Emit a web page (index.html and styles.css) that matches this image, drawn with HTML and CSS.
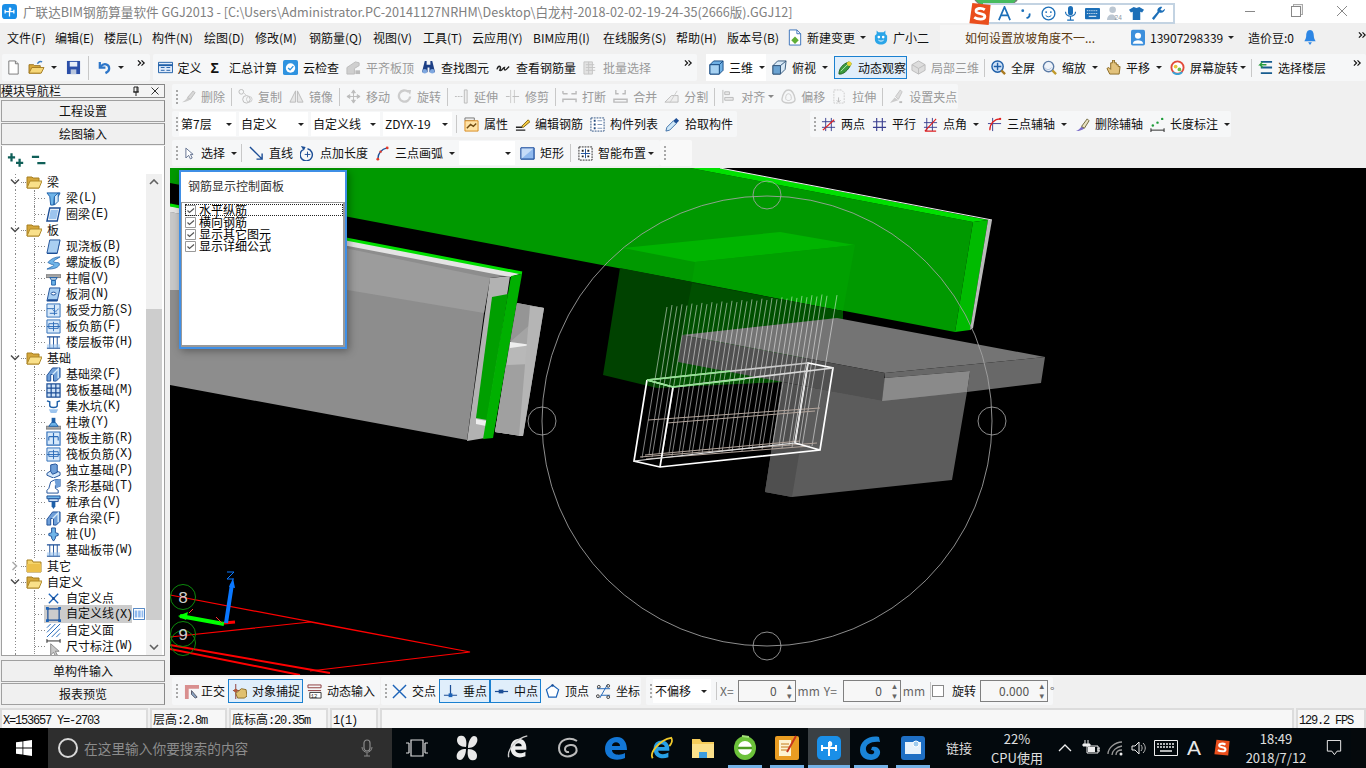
FILE: index.html
```html
<!DOCTYPE html>
<html lang="zh">
<head>
<meta charset="utf-8">
<title>广联达BIM钢筋算量软件</title>
<link rel="stylesheet" href="styles.css">
</head>
<body>
<svg class="defs" aria-hidden="true">
<defs>
<symbol id="ck" viewBox="0 0 11 11"><path d="M.5.5h10v10H.5z" fill="#fff" stroke="#999"/><path d="M2.500 5.500l2 2 4.500-4" fill="none" stroke="#555" stroke-width="1.200"/></symbol>
<symbol id="new" viewBox="0 0 16 16"><path d="M3 1h7l3 3v11H3z" fill="#fff" stroke="#777"/><path d="M10 1v3h3" fill="#ddd" stroke="#777"/></symbol>
<symbol id="open" viewBox="0 0 18 16"><path d="M1 14V5h5l1 1h6v8z" fill="#d9a93c" stroke="#9a7420"/><path d="M1 14l3-6h13l-3 6z" fill="#f6d778" stroke="#a37c24"/><path d="M10 4c1-2 3-3 5-2" fill="none" stroke="#3d7ec2" stroke-width="1.5"/></symbol>
<symbol id="save" viewBox="0 0 16 16"><path d="M1 1h14v14H1z" fill="#2b4fa8"/><path d="M4 2h8v5H4z" fill="#e8eef8"/><path d="M5 10h6v5H5z" fill="#b9c6de"/></symbol>
<symbol id="undo" viewBox="0 0 16 16"><path d="M3 2v6h6" fill="none" stroke="#2d76c9" stroke-width="2.4"/><path d="M4 7c3-4 9-3 9 2 0 2-2 4-4 5" fill="none" stroke="#2d76c9" stroke-width="2.4"/></symbol>
<symbol id="def" viewBox="0 0 16 16"><path d="M.5 2.500h15v11H.5z" fill="#dfeafa" stroke="#1f5fa8"/><path d="M.5 5.500h15" stroke="#1f5fa8" stroke-width="2"/><path d="M3 8h4M3 11h4M9 8h4M9 11h4" stroke="#1f5fa8"/></symbol>
<symbol id="cloud" viewBox="0 0 16 16"><rect width="16" height="16" rx="2" fill="#2f93e0"/><circle cx="8" cy="8.500" r="5" fill="#fff"/><path d="M5.500 8.500l2 2 3.500-4" fill="none" stroke="#2f93e0" stroke-width="1.500"/></symbol>
<symbol id="alig" viewBox="0 0 16 16"><path d="M1 15V8l9-6 4 1v3l-5 3v6z" fill="#cfcfcf" stroke="#bbb"/><path d="M10 15v-4h5v4z" fill="#bbb"/></symbol>
<symbol id="bino" viewBox="0 0 16 16"><path d="M4 1h2v4h4V1h2l3 12h-6V8H7v5H1z" fill="#1d3f85"/><circle cx="4" cy="12" r="2.500" fill="#7fa8e0"/><circle cx="12" cy="12" r="2.500" fill="#7fa8e0"/></symbol>
<symbol id="look" viewBox="0 0 16 16"><path d="M1 10c2-6 5-3 3 1 3 1 3-3 5-3-1 3 1 3 2 2l3-3" fill="none" stroke="#222" stroke-width="1.500"/></symbol>
<symbol id="batc" viewBox="0 0 16 16"><path d="M1 2h9v13H1z" fill="#e2e2e2" stroke="#c4c4c4"/><path d="M3 5h9M3 8h10M3 11h10M6 2v13" stroke="#c4c4c4"/></symbol>
<symbol id="cube" viewBox="0 0 16 16"><path d="M1 5l4-4h10v10l-4 4H1z" fill="#6fb0e4" stroke="#184b82"/><path d="M1 5h10v10M11 5l4-4" fill="none" stroke="#184b82"/><path d="M1 5h10v10H1z" fill="#a6d1f2" stroke="#184b82"/></symbol>
<symbol id="cube2" viewBox="0 0 16 16"><path d="M1 6l5-5h9l-1 9-5 5H1z" fill="#d9e9f6" stroke="#33577c"/><path d="M1 6h8v9M9 6l6-5" fill="none" stroke="#33577c"/><path d="M1 6h8v9H1z" fill="#6ba3d2" stroke="#33577c"/></symbol>
<symbol id="orbi" viewBox="0 0 16 16"><path d="M1 15c0-6 4-11 11-13l2 2C12 9 8 14 3 15z" fill="#3c9b3c" stroke="#1e5e1e"/><circle cx="12" cy="4" r="2.500" fill="#e8d434"/><path d="M3 12l7-7" stroke="#b7e7b7"/></symbol>
<symbol id="l3d" viewBox="0 0 16 16"><path d="M8 1l7 4v6l-7 4-7-4V5z" fill="#ddd" stroke="#bbb"/><path d="M1 5l7 4 7-4M8 9v6" fill="none" stroke="#bbb"/></symbol>
<symbol id="fit" viewBox="0 0 16 16"><circle cx="7" cy="7" r="6" fill="#cfe2f7" stroke="#1f5fa8" stroke-width="1.500"/><path d="M7 3v8M3 7h8" stroke="#1f5fa8" stroke-width="1.500"/><path d="M11 11l4 4" stroke="#a9791f" stroke-width="2.500"/></symbol>
<symbol id="zoom" viewBox="0 0 16 16"><circle cx="7" cy="7" r="5.500" fill="#eef3fa" stroke="#5b7ba6" stroke-width="1.500"/><path d="M11 11l4 4" stroke="#c09a2b" stroke-width="2.500"/><path d="M3 8c2 3 5 3 7 0" fill="none" stroke="#a9bedc"/></symbol>
<symbol id="hand" viewBox="0 0 16 16"><path d="M4 15l-3-6 2-1 2 2 0-7 2 0 0-3 2 0 0 3 2 0 0 2 2 0 0 2 2 0-1 8z" fill="#e2c27c" stroke="#8a6a24"/></symbol>
<symbol id="rota" viewBox="0 0 16 16"><circle cx="8" cy="8" r="6.500" fill="#fff" stroke="#e24a3a" stroke-width="2"/><path d="M3 13a7 7 0 0 0 10 0" fill="none" stroke="#37a3d8" stroke-width="2"/><circle cx="6" cy="7" r="2" fill="#e8c63a"/><circle cx="10" cy="10" r="2" fill="#6cbf4a"/></symbol>
<symbol id="flr" viewBox="0 0 16 16"><path d="M3 2h12M3 8h12M3 14h12" stroke="#175c8f" stroke-width="2"/><path d="M9 5H2l3-3M2 5l3 3" fill="none" stroke="#2a9d3f" stroke-width="1.500"/></symbol>
<symbol id="file" viewBox="0 0 14 18"><path d="M1 1h8l4 4v12H1z" fill="#fff" stroke="#3a72ba"/><path d="M9 1v4h4" fill="none" stroke="#3a72ba"/><path d="M7 8l4 4-4 4-4-4z" fill="#5fae35"/></symbol>
<symbol id="robo" viewBox="0 0 16 18"><path d="M3 1l2 2h6l2-2v4l2 2v4c0 4-3 6-7 6s-7-2-7-6V7l2-2z" fill="#2aa5e8"/><circle cx="5.500" cy="8.500" r="1.500" fill="#fff"/><circle cx="10.500" cy="8.500" r="1.500" fill="#fff"/><path d="M5 12c2 1.500 4 1.500 6 0" fill="none" stroke="#fff"/></symbol>
<symbol id="user" viewBox="0 0 16 18"><rect width="16" height="18" rx="2" fill="#3c8fdc"/><circle cx="8" cy="7" r="3.500" fill="#fff"/><path d="M2 16c1-5 11-5 12 0z" fill="#fff"/></symbol>
<symbol id="bell" viewBox="0 0 14 18"><path d="M7 1c3 0 4 3 4 6 0 3 1 4 2 6H1c1-2 2-3 2-6 0-3 1-6 4-6z" fill="#2d86e4"/><path d="M5 14h4l-2 3z" fill="#2d86e4"/></symbol>
<symbol id="more" viewBox="0 0 10 8"><path d="M1 1l3 3-3 3M5 1l3 3-3 3" fill="none" stroke="#111" stroke-width="1.300"/></symbol>

<symbol id="del" viewBox="0 0 16 16"><path d="M1 14c3-1 4-3 6-5l3 2c-2 2-5 3-9 3z" fill="#ccc"/><path d="M7 9l6-7 2 2-5 7z" fill="#d8d8d8" stroke="#bbb"/></symbol>
<symbol id="copy" viewBox="0 0 16 16"><circle cx="3.500" cy="3" r="2.500" fill="none" stroke="#bbb"/><circle cx="9" cy="11" r="4" fill="none" stroke="#bbb"/><circle cx="12" cy="11" r="3" fill="none" stroke="#ccc"/><path d="M6 4l3 3" stroke="#ccc"/></symbol>
<symbol id="mirr" viewBox="0 0 16 16"><path d="M7 2v12H1zM9 2v12h6z" fill="#e6e6e6" stroke="#bbb"/></symbol>
<symbol id="move" viewBox="0 0 16 16"><path d="M8 1v14M1 8h14M8 1L6 4h4zM8 15l-2-3h4zM1 8l3-2v4zM15 8l-3-2v4z" fill="#ccc" stroke="#bbb"/></symbol>
<symbol id="turn" viewBox="0 0 16 16"><path d="M12 3a6 6 0 1 0 2 5" fill="none" stroke="#ccc" stroke-width="2.500"/><path d="M10 1l5 0-1 5z" fill="#ccc"/></symbol>
<symbol id="ext" viewBox="0 0 16 16"><path d="M1 8h8" stroke="#bbb" stroke-dasharray="2 1"/><path d="M11 1h3v14h-3z" fill="#eee" stroke="#bbb"/></symbol>
<symbol id="trim" viewBox="0 0 16 16"><path d="M6 1v14M10 1v14" stroke="#ccc"/><path d="M1 8h4M8 8h7" stroke="#bbb"/></symbol>
<symbol id="brk" viewBox="0 0 16 16"><path d="M1 5V2M1 5h5M10 5h5V2M1 14v-3h14v3" fill="none" stroke="#bbb" stroke-width="1.500"/></symbol>
<symbol id="merg" viewBox="0 0 16 16"><path d="M3 1v4h3M13 1v4h-3M1 11h14v3H1z" fill="none" stroke="#bbb" stroke-width="1.500"/></symbol>
<symbol id="splt" viewBox="0 0 16 16"><path d="M1 14l7-7h7v7z" fill="#eee" stroke="#bbb"/><path d="M14 2L6 15" stroke="#ccc"/></symbol>
<symbol id="aln" viewBox="0 0 16 16"><path d="M2 1v14" stroke="#bbb"/><path d="M4 3h5v3H4zM4 9h9v3H4z" fill="#e8e8e8" stroke="#bbb"/></symbol>
<symbol id="off" viewBox="0 0 16 16"><path d="M8 1c4 0 6 4 7 10 0 3-3 4-7 4s-7-1-7-4C2 5 4 1 8 1z" fill="none" stroke="#ccc" stroke-width="1.500"/><path d="M8 5c2 0 3 2 3 5s-6 3-6 0 1-5 3-5z" fill="none" stroke="#ccc"/></symbol>
<symbol id="strt" viewBox="0 0 16 16"><path d="M2 1h8l3 3v11H2z" fill="none" stroke="#ccc" stroke-dasharray="2 1"/><path d="M7 9v5M5 12l2 2 2-2" fill="none" stroke="#bbb"/></symbol>
<symbol id="grp" viewBox="0 0 16 16"><path d="M1 15l5-6 4 3z" fill="#ccc"/><path d="M7 8l5-7 2 2-4 8z" fill="#ddd" stroke="#c4c4c4"/><path d="M11 14h3" stroke="#bbb" stroke-width="2"/></symbol>

<symbol id="prop" viewBox="0 0 16 16"><path d="M1 1h10v3H1z" fill="#eee" stroke="#777"/><path d="M1 4h14v11H1z" fill="#ffe3a6" stroke="#d98a1f"/><path d="M3 12l4-4 3 2 3-3" fill="none" stroke="#6f4a12" stroke-width="1.500"/></symbol>
<symbol id="edit" viewBox="0 0 16 16"><path d="M1 11h7M1 14h10" stroke="#222" stroke-width="1.500"/><path d="M7 10l7-7 2 2-7 6z" fill="#f3c840" stroke="#7d6212"/></symbol>
<symbol id="list" viewBox="0 0 16 16"><path d="M1 1h14v14H1z" fill="#fff" stroke="#274e80" stroke-dasharray="2 1"/><path d="M4 4h2M4 8h2M4 12h2" stroke="#274e80" stroke-width="2"/><path d="M8 4h5M8 8h5M8 12h5" stroke="#7b93b5"/></symbol>
<symbol id="pick" viewBox="0 0 16 16"><path d="M1 15l1-4 7-7 3 3-7 7z" fill="#cfe8f8" stroke="#3d6fa6"/><path d="M9 4l3-3 3 3-3 3z" fill="#1c4e96"/></symbol>
<symbol id="two" viewBox="0 0 16 16"><path d="M5 1v14M11 1v14M1 5h14M1 11h14" stroke="#3a3f8f"/><path d="M2 14L14 3" stroke="#e02020" stroke-width="1.300"/></symbol>
<symbol id="par" viewBox="0 0 16 16"><path d="M5 1v14M11 1v14M1 5h14M1 11h14" stroke="#3a3f8f" stroke-width="1.200"/></symbol>
<symbol id="ang" viewBox="0 0 16 16"><path d="M4 1v14M10 1v14M1 6h14M1 11h14" stroke="#3a3f8f"/><path d="M2 15L14 2M2 15h12" stroke="#e02020" stroke-width="1.200" fill="none"/></symbol>
<symbol id="arca" viewBox="0 0 16 16"><path d="M1 7h14M6 1v14" stroke="#3a3f8f"/><path d="M3 14C3 7 8 2 14 2" fill="none" stroke="#e02020" stroke-width="1.300"/><circle cx="14" cy="2" r="1.200" fill="#e02020"/></symbol>
<symbol id="dela" viewBox="0 0 16 16"><path d="M1 15c3-1 4-3 6-5l3 2c-2 2-5 3-9 3z" fill="#7b6cc9"/><path d="M7 10l6-8 2 2-5 8z" fill="#e8e2c0" stroke="#6b6236"/></symbol>
<symbol id="dim" viewBox="0 0 16 16"><path d="M1 12v4M15 12v4M1 14h14" stroke="#222"/><circle cx="3" cy="9" r="1.300" fill="#1f9d3a"/><circle cx="8" cy="6" r="1.300" fill="#1f9d3a"/><circle cx="13" cy="2" r="1.300" fill="#1f9d3a"/></symbol>
<symbol id="curs" viewBox="0 0 10 14"><path d="M1 1v11l3-3 2 4 2-1-2-4h3z" fill="#fff" stroke="#5a6a8a"/></symbol>
<symbol id="line" viewBox="0 0 16 16"><path d="M1 1l13 13M14 8v6H8" fill="none" stroke="#1c4e96" stroke-width="1.500"/></symbol>
<symbol id="addl" viewBox="0 0 16 16"><path d="M3 4a6.500 6.500 0 1 0 5-1" fill="none" stroke="#1c4e96" stroke-width="1.500"/><path d="M8 6v6M5 9h6" stroke="#1c4e96"/><path d="M1 0l5 1-2 4z" fill="#1c4e96"/></symbol>
<symbol id="arc" viewBox="0 0 14 16"><path d="M2 14C2 8 6 3 12 2" fill="none" stroke="#1c4e96" stroke-width="1.400"/><circle cx="2" cy="14" r="1.500" fill="#e23a2a"/><circle cx="5" cy="6" r="1.300" fill="#e23a2a"/><circle cx="12" cy="2" r="1.500" fill="#e23a2a"/></symbol>
<symbol id="rect" viewBox="0 0 16 16"><path d="M1 2h14v12H1z" fill="#8fb9ee" stroke="#2d5ca6"/><path d="M1 2h14L1 14z" fill="#c5dcf8"/><path d="M1 2h14v12H1z" fill="none" stroke="#2d5ca6"/></symbol>
<symbol id="smrt" viewBox="0 0 16 16"><path d="M1 1h14v14H1z" fill="#fff" stroke="#222" stroke-dasharray="2 1"/><path d="M8 3v10M3 8h10" stroke="#1c4e96"/><path d="M4 4h2v2H4zM10 4h2v2h-2zM4 10h2v2H4zM10 10h2v2h-2z" fill="#222"/></symbol>

<symbol id="orth" viewBox="0 0 18 16"><path d="M2 1h15v4H6v11H2z" fill="#d98f8f"/><path d="M9 7l6 7-2 1-4-4z" fill="#8aa6c4" stroke="#556"/></symbol>
<symbol id="snap" viewBox="0 0 16 16"><path d="M4 0v16M1 7h14" stroke="#8c3a3a"/><circle cx="4" cy="7" r="2" fill="#b05a3a"/><path d="M6 15l-2-5 6-5 5 1 1 7-3 2z" fill="#e0c070" stroke="#8a6a24"/></symbol>
<symbol id="dyn" viewBox="0 0 16 16"><path d="M1 1h14v3H1zM1 7h14" fill="none" stroke="#8c3a3a"/><path d="M3 9h12v6H3z" fill="#fff" stroke="#333"/><text x="4" y="14.500" font-size="6" font-family="Liberation Mono" fill="#222">12</text></symbol>
<symbol id="crs" viewBox="0 0 16 16"><path d="M1 1l14 14M15 1L1 15" stroke="#1c63b8" stroke-width="1.500"/></symbol>
<symbol id="perp" viewBox="0 0 16 16"><path d="M1 12h14M8 1v11" stroke="#1c4e96" stroke-width="1.300"/><rect x="6" y="10" width="4" height="4" fill="#1c63b8"/></symbol>
<symbol id="mid" viewBox="0 0 16 16"><path d="M1 8h14" stroke="#1c4e96" stroke-width="1.300"/><rect x="5" y="6" width="5" height="4" fill="#1c4e96"/></symbol>
<symbol id="vrt" viewBox="0 0 16 16"><path d="M8 1l6.500 5-2.500 8H4L1.500 6z" fill="#fff" stroke="#1c63b8" stroke-width="1.300"/><circle cx="8" cy="1.500" r="1.300" fill="#1c4e96"/></symbol>
<symbol id="crd" viewBox="0 0 16 16"><path d="M1 5h14M5 12h10M12 1L4 15" stroke="#1c63b8" fill="none"/><circle cx="3" cy="3" r="1.500" fill="none" stroke="#333"/><circle cx="13" cy="2" r="1.500" fill="none" stroke="#333"/><circle cx="2" cy="13" r="1.500" fill="none" stroke="#333"/><circle cx="13" cy="14" r="1.500" fill="none" stroke="#333"/></symbol>

<symbol id="chvd" viewBox="0 0 10 8"><path d="M1 1.500l4 4 4-4" fill="none" stroke="#4b4b4b" stroke-width="1.500"/></symbol>
<symbol id="chvr" viewBox="0 0 8 10"><path d="M1.500 1l4 4-4 4" fill="none" stroke="#aaa" stroke-width="1.500"/></symbol>
<symbol id="fold" viewBox="0 0 16 14"><path d="M1 13V2h5l1 1h6v10z" fill="#d4a63a" stroke="#a67e20"/><path d="M1 13l3-7h12l-3 7z" fill="#f9e08a" stroke="#b08a2a"/></symbol>
<symbol id="foldc" viewBox="0 0 16 14"><path d="M1 13V1h5l1 2h8v10z" fill="#f5d46a" stroke="#a67e20"/><path d="M1 5h14v8H1z" fill="#ecc04a"/></symbol>
<symbol id="beam" viewBox="0 0 16 16"><path d="M1 2h14l-2 4H9l-1 9H5L4 6z" fill="#6fb4e8" stroke="#1c5fa8"/><path d="M9 6l4-4v9l-4 4z" fill="#d7ebfa" stroke="#1c5fa8"/></symbol>
<symbol id="ring" viewBox="0 0 16 16"><path d="M4 1h11l-3 14H1z" fill="#fff" stroke="#1c4e96" stroke-width="1.500"/><path d="M5 3h8l-2 10H3z" fill="#9cc4ee"/></symbol>
<symbol id="slab" viewBox="0 0 16 16"><path d="M4 1h11l-3 14H1z" fill="#a9cff2" stroke="#1c4e96"/><path d="M1 15h11l3-14v2l-3 13H1z" fill="#1c4e96"/></symbol>
<symbol id="spir" viewBox="0 0 16 16"><path d="M2 8c3-4 8-6 13-6l-5 3c-2 1-3 3 1 3 3 0 4 1 3 3-2 3-6 4-13 4l6-3c2-1 2-2-1-2z" fill="#6fb4e8" stroke="#1c5fa8" stroke-width=".800"/></symbol>
<symbol id="cap" viewBox="0 0 16 16"><path d="M0 4h16v3H0z" fill="#aaa" stroke="#777"/><path d="M4 7h8l-2 3H6z" fill="#bcd" stroke="#1c5fa8"/><path d="M6 10h4v5H6z" fill="#6fb4e8" stroke="#1c5fa8"/></symbol>
<symbol id="hole" viewBox="0 0 16 16"><path d="M4 1h11l-3 14H1z" fill="#a9cff2" stroke="#1c4e96"/><ellipse cx="8" cy="7" rx="2.500" ry="1.500" fill="#fff" stroke="#1c4e96"/><path d="M1 15h11v-2H2z" fill="#1c4e96"/></symbol>
<symbol id="rbf" viewBox="0 0 16 16"><path d="M1 1h14v14H1z" fill="#d7e9fa" stroke="#2d6cb8"/><path d="M1 6h8M9 2v11M4 11h8" stroke="#2d6cb8"/><path d="M7 7c2 3 5 2 6-1" fill="none" stroke="#2d6cb8"/></symbol>
<symbol id="neg" viewBox="0 0 16 16"><path d="M1 1h14v14H1z" fill="#d7e9fa" stroke="#2d6cb8"/><path d="M3 5h10v5H3zM1 8h14M8 3v10" fill="none" stroke="#2d6cb8"/></symbol>
<symbol id="band" viewBox="0 0 16 16"><path d="M1 2h14M1 14h14" stroke="#1c4e96" stroke-width="1.500"/><path d="M4 2v12M8 2v12M12 2v12" stroke="#1c4e96"/><path d="M1 10h14v4H1z" fill="#9cc4ee" opacity=".6"/></symbol>
<symbol id="fbm" viewBox="0 0 16 16"><path d="M1 15V9l6-8h8v10l-4 4H8V8H5v7z" fill="#6f9fd8" stroke="#1c4e96"/><path d="M7 8l6-6v10" fill="none" stroke="#d7ebfa" stroke-width="1.500"/></symbol>
<symbol id="raft" viewBox="0 0 16 16"><path d="M1 1h14v14H1z" fill="#cfe2f7" stroke="#1c4e96" stroke-width="1.300"/><path d="M5.500 1v14M10.500 1v14M1 5.500h14M1 10.500h14" stroke="#1c4e96" stroke-width="1.300"/></symbol>
<symbol id="pit" viewBox="0 0 16 16"><path d="M1 2l3 1v4c0 2 2 2 4 2s4 0 4-2V3l3-1" fill="none" stroke="#1c5fa8" stroke-width="1.500"/><path d="M3 11h10l-2 4H5z" fill="#9cc4ee"/></symbol>
<symbol id="pier" viewBox="0 0 16 16"><path d="M0 12h16v3H0z" fill="#aaa" stroke="#777"/><path d="M3 12l3-4h4l3 4z" fill="#6fb4e8" stroke="#1c5fa8"/><path d="M6 8h4V3H6z" fill="#1c5fa8"/></symbol>
<symbol id="rmn" viewBox="0 0 16 16"><path d="M1 1h14v14H1z" fill="#d7e9fa" stroke="#2d6cb8" stroke-width="1.200"/><path d="M8 2v12M3 6h10M3 6v4M13 6v4" fill="none" stroke="#2d6cb8" stroke-width="1.200"/></symbol>
<symbol id="iso" viewBox="0 0 16 16"><path d="M1 11l6-4 8 3v3l-7 3-7-3z" fill="#d7e9fa" stroke="#1c4e96"/><path d="M5 9V2l5-1 2 1v8l-5 2z" fill="#6f9fd8" stroke="#1c4e96"/></symbol>
<symbol id="strp" viewBox="0 0 16 16"><path d="M1 15v-3l2-2 2-7 4-2 6-1v8h-3l-2-1v3l3 2v3z" fill="#fff" stroke="#1c4e96"/><path d="M9 1l6-1v8l-4 2z" fill="#6f9fd8"/></symbol>
<symbol id="pcap" viewBox="0 0 16 16"><path d="M1 1h14v3H1z" fill="#6fb4e8" stroke="#1c4e96"/><path d="M3 4h10v3H3z" fill="#cfe2f7" stroke="#1c4e96"/><path d="M6 7h4v5l-2 3-2-3z" fill="#1c5fa8"/></symbol>
<symbol id="pile" viewBox="0 0 16 16"><path d="M6 1h4v5l3 1v2l-3 1v2l-2 3-2-3v-2L3 9V7l3-1z" fill="#6fb4e8" stroke="#1c4e96"/></symbol>
<symbol id="pnt" viewBox="0 0 16 16"><path d="M3 3l10 10M13 3L3 13" stroke="#1c63b8" stroke-width="1.400"/><circle cx="8" cy="8" r="1.500" fill="#1c4e96"/></symbol>
<symbol id="lnn" viewBox="0 0 16 16"><path d="M2 2h12v12H2z" fill="none" stroke="#1c4e96" stroke-width="1.300"/><path d="M0 0h3v3H0zM13 0h3v3h-3zM0 13h3v3H0zM13 13h3v3h-3z" fill="#1c63b8"/></symbol>
<symbol id="fac" viewBox="0 0 16 16"><path d="M1 15L15 1M1 10l9-9M1 5l4-4M6 15l9-9M11 15l4-4" stroke="#1c63b8"/></symbol>
<symbol id="dmn" viewBox="0 0 16 20"><path d="M1 1v4M15 1v4M1 3h14" stroke="#222"/><path d="M5 6v12l3-3 2 4 2-1-2-4h4z" fill="#c8c8c8" stroke="#888"/></symbol>
<symbol id="grid" viewBox="0 0 14 14"><path d="M.5.5h13v13H.5z" fill="#fff" stroke="#2d6cb8"/><path d="M2 3h3v8H2zM6 3h3v8H6zM10 3h2v8h-2z" fill="#8fb9ee"/></symbol>
<symbol id="pls" viewBox="0 0 20 16"><path d="M5 0v9M1 4.500h8M14 6v9M10 10.500h8" stroke="#0f5f58" stroke-width="2.500"/></symbol>
<symbol id="mns" viewBox="0 0 20 16"><path d="M1 4h8M7 11h9" stroke="#0f5f58" stroke-width="2.500"/></symbol>
<symbol id="pin" viewBox="0 0 8 10"><path d="M2 1h4v5H2zM1 6h6M4 6v4M5 1v5" fill="none" stroke="#222"/></symbol>
<symbol id="cls" viewBox="0 0 8 8"><path d="M.5.5l7 7M7.500.5l-7 7" stroke="#333"/></symbol>

<symbol id="win" viewBox="0 0 16 16"><path d="M0 2.300L6.500 1.400V7.600H0zM7.300 1.300L16 0V7.600H7.300zM0 8.400H6.500V14.600L0 13.700zM7.300 8.400H16V16L7.300 14.700z" fill="#fff"/></symbol>
<symbol id="mic" viewBox="0 0 12 18"><rect x="3" y="1" width="6" height="11" rx="3" fill="none" stroke="#8a8a8a" stroke-width="1.200"/><path d="M1 8c0 7 10 7 10 0M6 14v3M3 17h6" fill="none" stroke="#8a8a8a"/></symbol>
<symbol id="tview" viewBox="0 0 22 18"><path d="M5 1h12v16H5zM0 4h3M3 4v10M0 14h3M19 4h3M19 4v10M19 14h3" fill="none" stroke="#ddd" stroke-width="1.200"/></symbol>
<symbol id="fan" viewBox="0 0 22 26"><path d="M10 12C4 12 1 9 1 5s3-5 6-4 4 6 3 11zM12 13c0-6 3-12 6-12s4 3 3 6-4 6-9 6zM12 14c6 0 9 3 9 7s-3 5-6 4-4-6-3-11zM10 14c0 6-3 11-6 11s-4-3-3-6 4-5 9-5z" fill="#e8e8e8"/></symbol>
<symbol id="iew" viewBox="0 0 24 28"><path d="M4 14C4 8 8 4 13 4s8 4 8 10v2H9c0 4 6 5 11 2v5c-8 3-16 0-16-9zM9 12h7c0-4-7-4-7 0z" fill="#eee"/><path d="M2 24C0 16 10 4 22 1" fill="none" stroke="#ccc" stroke-width="1.500"/></symbol>
<symbol id="swrl" viewBox="0 0 24 24"><path d="M21 5C13 0 3 4 3 12s8 10 14 7 4-11-3-10-6 8-1 7" fill="none" stroke="#bbb" stroke-width="2"/></symbol>
<symbol id="edge" viewBox="0 0 24 24"><path d="M1 13C1 6 6 1 13 1s10 6 10 13H8c0 5 8 6 13 3v5c-9 4-20 1-20-9zM8 10h8c0-5-8-5-8 0z" fill="#1377d6"/></symbol>
<symbol id="ie" viewBox="0 0 26 26"><path d="M5 14C5 8 9 5 14 5s8 4 8 9v2H10c0 4 6 5 11 2v5c-8 3-16 0-16-9zM10 12h7c0-4-7-4-7 0z" fill="#27a0e6"/><path d="M4 24C0 18 12 4 24 2c2 3 0 7-2 9" fill="none" stroke="#f0c92c" stroke-width="2"/></symbol>
<symbol id="dir" viewBox="0 0 24 24"><path d="M1 3h8l2 3h12v16H1z" fill="#f5cc5a"/><path d="M1 8h22v14H1z" fill="#fbe08a"/><path d="M8 16h8v6H8z" fill="#3c9ce0"/></symbol>
<symbol id="gre" viewBox="0 0 24 26"><ellipse cx="12" cy="13" rx="11" ry="12" fill="#6cc23a"/><circle cx="12" cy="13" r="7" fill="#fff"/><path d="M5 13h14" stroke="#4c9c22" stroke-width="2.500"/><path d="M9 1l7 1" stroke="#a5e27a" stroke-width="2"/></symbol>
<symbol id="note" viewBox="0 0 24 26"><rect y="1" width="24" height="24" rx="2" fill="#e99c22"/><path d="M4 5h12v16H4z" fill="#fdf3d2"/><path d="M6 9h8M6 12h8M6 15h6" stroke="#c47a1a"/><path d="M21 1L12 17" stroke="#c6361e" stroke-width="2"/></symbol>
<symbol id="gld" viewBox="0 0 24 24"><rect width="24" height="24" rx="5" fill="#1a8fe8"/><path d="M4 12h16M12 6v14M12 6c3 0 3 4 0 4M5 9v6M19 9v6" fill="none" stroke="#fff" stroke-width="2"/></symbol>
<symbol id="gg" viewBox="0 0 24 26"><path d="M20 2C10 0 1 6 1 15c0 7 6 10 11 10s10-4 9-9c-1-4-5-5-8-4l-1 3c2 0 4 1 3 3s-7 2-8-3C6 9 13 6 21 7z" fill="#1a84d6"/></symbol>
<symbol id="book" viewBox="0 0 24 26"><rect y="1" width="24" height="24" rx="3" fill="#1f6fc4"/><path d="M4 7h8v12H4zM12 7h8v12h-8z" fill="#e8f2fb"/><circle cx="15" cy="9" r="3" fill="#9fcbee" stroke="#fff"/></symbol>
<symbol id="up" viewBox="0 0 14 8"><path d="M1 7l6-6 6 6" fill="none" stroke="#eee" stroke-width="1.300"/></symbol>
<symbol id="batt" viewBox="0 0 18 16"><path d="M5 6h11v7H5zM16 8h2v3h-2z" fill="none" stroke="#eee"/><path d="M6 7h7v5H6z" fill="#eee"/><path d="M3 0v4M6 0v4M1 4h7v2H1z" stroke="#eee" fill="#eee"/></symbol>
<symbol id="wifi" viewBox="0 0 16 16"><path d="M1 14C1 8 8 2 15 2M5 15c0-4 4-8 10-9M9 15c0-3 2-5 6-5" fill="none" stroke="#999" stroke-width="1.300"/><circle cx="14" cy="14" r="1.500" fill="#eee"/></symbol>
<symbol id="spk" viewBox="0 0 16 16"><path d="M1 6h3l4-4v12l-4-4H1z" fill="none" stroke="#eee"/><path d="M10 5c1.500 2 1.500 4 0 6M12 3c3 3 3 7 0 10" fill="none" stroke="#bbb"/></symbol>
<symbol id="kbd" viewBox="0 0 24 16"><path d="M.5.5h23v15H.5z" fill="none" stroke="#eee"/><path d="M3 4h18M3 7h18" stroke="#eee" stroke-width="1.500" stroke-dasharray="2 1"/><path d="M6 11h12" stroke="#eee" stroke-width="1.500"/></symbol>
<symbol id="sgo" viewBox="0 0 24 26"><path d="M4 1l19 2-2 21-20-2z" fill="#ea4e1c"/><path d="M17 8c-3-2-10-2-9 2 1 3 9 1 9 5 0 4-8 3-11 1" fill="none" stroke="#fff" stroke-width="3"/></symbol>
<symbol id="ntf" viewBox="0 0 16 18"><path d="M.5.5h15v12h-4l-3 4-3-4h-5z" fill="none" stroke="#eee" stroke-width="1.100"/></symbol>
<symbol id="ia" viewBox="0 0 14 16"><path d="M1 15L7 1l6 14M3.500 10h7" fill="none" stroke="#1c6fb8" stroke-width="1.800"/></symbol>
<symbol id="ipn" viewBox="0 0 14 16"><circle cx="3" cy="5" r="1.500" fill="#1c6fb8"/><path d="M10 8c1 2 0 4-3 5" fill="none" stroke="#1c6fb8" stroke-width="2"/></symbol>
<symbol id="ism" viewBox="0 0 16 16"><circle cx="8" cy="8" r="6.800" fill="#fff" stroke="#1c6fb8" stroke-width="1.400"/><circle cx="5.500" cy="6.500" r="1" fill="#1c6fb8"/><circle cx="10.500" cy="6.500" r="1" fill="#1c6fb8"/><path d="M5 10c1.500 2 4.500 2 6 0" fill="none" stroke="#1c6fb8"/></symbol>
<symbol id="imc" viewBox="0 0 14 18"><rect x="4" y="0" width="6" height="11" rx="3" fill="#1c6fb8"/><path d="M1 7c0 7 12 7 12 0M7 13v4M3 17h8" fill="none" stroke="#1c6fb8" stroke-width="1.400"/></symbol>
<symbol id="ikb" viewBox="0 0 16 12"><rect width="16" height="12" rx="1" fill="#1c6fb8"/><path d="M2 3h12M2 6h12" stroke="#fff" stroke-dasharray="1 1"/><path d="M4 9h8" stroke="#fff"/></symbol>
<symbol id="ipr" viewBox="0 0 16 16"><circle cx="6" cy="4" r="3.500" fill="#bcc7d2"/><path d="M0 15c0-8 10-8 10 0z" fill="#bcc7d2"/><text x="8" y="15" font-size="7" font-family="Liberation Sans" fill="#8a98a6">24</text></symbol>
<symbol id="ish" viewBox="0 0 16 16"><path d="M5 1l3 1 3-1 5 3-2 3-2-1v9H4V6L2 7 0 4z" fill="#1c6fb8"/></symbol>
<symbol id="iwr" viewBox="0 0 16 16"><path d="M15 3c0 3-3 5-6 4l-6 8-2-2 6-7C6 3 9 0 12 1l-2 3 2 1z" fill="#1c6fb8"/></symbol>
</defs>
</svg>

<div class="app">
  <header class="title">
    <svg class="ic-title"><use href="#gld"/></svg>
    <span class="title-text">广联达BIM钢筋算量软件 GGJ2013 - [C:\Users\Administrator.PC-20141127NRHM\Desktop\白龙村-2018-02-02-19-24-35(2666版).GGJ12]</span>
    <span class="wc wc-min"></span><span class="wc wc-max"></span>
    <svg class="wc-x" viewBox="0 0 12 12"><path d="M1 1l10 10M11 1L1 11" stroke="#888"/></svg>
    <div class="ime">
      <span class="ime-green"></span>
      <svg class="ime-s"><use href="#sgo"/></svg>
      <div class="ime-bar">
        <svg class="im"><use href="#ia"/></svg>
        <svg class="im"><use href="#ipn"/></svg>
        <svg class="im"><use href="#ism"/></svg>
        <svg class="im"><use href="#imc"/></svg>
        <svg class="im"><use href="#ikb"/></svg>
        <svg class="im"><use href="#ipr"/></svg>
        <svg class="im"><use href="#ish"/></svg>
        <svg class="im"><use href="#iwr"/></svg>
      </div>
    </div>
  </header>

  <nav class="menu">
    <span>文件(F)</span><span>编辑(E)</span><span>楼层(L)</span><span>构件(N)</span><span>绘图(D)</span><span>修改(M)</span><span>钢筋量(Q)</span><span>视图(V)</span><span>工具(T)</span><span>云应用(Y)</span><span>BIM应用(I)</span><span>在线服务(S)</span><span>帮助(H)</span><span>版本号(B)</span>
    <span class="mi"><svg class="i14"><use href="#file"/></svg>新建变更<i class="ar"></i></span>
    <span class="mi"><svg class="i14"><use href="#robo"/></svg>广小二</span>
    <span class="news">如何设置放坡角度不一...</span>
    <span class="mi"><svg class="i14"><use href="#user"/></svg>13907298339<i class="ar"></i></span>
    <span>造价豆:0</span>
    <span><svg class="i14"><use href="#bell"/></svg></span>
    <svg class="more"><use href="#more"/></svg>
  </nav>

  <div class="row1">
    <div class="g g-a">
      <svg class="i"><use href="#new"/></svg>
      <svg class="i i-open"><use href="#open"/></svg><i class="ar"></i>
      <svg class="i"><use href="#save"/></svg>
      <b class="sep"></b>
      <svg class="i"><use href="#undo"/></svg><i class="ar"></i>
      <svg class="more more-end"><use href="#more"/></svg>
    </div>
    <div class="g g-b">
      <span class="b"><svg class="i"><use href="#def"/></svg>定义</span>
      <span class="b b-s"><em class="sigma">Σ</em>汇总计算</span>
      <span class="b"><svg class="i"><use href="#cloud"/></svg>云检查</span>
      <span class="b off"><svg class="i"><use href="#alig"/></svg>平齐板顶</span>
      <span class="b"><svg class="i"><use href="#bino"/></svg>查找图元</span>
      <span class="b"><svg class="i"><use href="#look"/></svg>查看钢筋量</span>
      <span class="b off"><svg class="i"><use href="#batc"/></svg>批量选择</span>
      <svg class="more more-end"><use href="#more"/></svg>
    </div>
    <div class="g g-c">
      <span class="b b-w"><svg class="i"><use href="#cube"/></svg>三维<i class="ar ar-w"></i></span>
      <span class="b"><svg class="i"><use href="#cube2"/></svg>俯视<i class="ar ar-w"></i></span>
      <span class="b b-on"><svg class="i"><use href="#orbi"/></svg>动态观察</span>
      <span class="b off"><svg class="i"><use href="#l3d"/></svg>局部三维</span>
      <b class="sep"></b>
      <span class="b"><svg class="i"><use href="#fit"/></svg>全屏</span>
      <span class="b"><svg class="i"><use href="#zoom"/></svg>缩放<i class="ar ar-w"></i></span>
      <span class="b"><svg class="i"><use href="#hand"/></svg>平移<i class="ar ar-w"></i></span>
      <span class="b"><svg class="i"><use href="#rota"/></svg>屏幕旋转<i class="ar ar-t"></i></span>
      <b class="sep"></b>
      <span class="b"><svg class="i"><use href="#flr"/></svg>选择楼层</span>
      <svg class="more more-end"><use href="#more"/></svg>
    </div>
  </div>

  <div class="body">
    <aside class="nav">
      <div class="nav-head"><span>模块导航栏</span><svg class="pin"><use href="#pin"/></svg><svg class="cls"><use href="#cls"/></svg></div>
      <div class="nav-btn">工程设置</div>
      <div class="nav-btn">绘图输入</div>
      <div class="tree-box">
        <div class="tree-tools"><svg class="tt"><use href="#pls"/></svg><svg class="tt"><use href="#mns"/></svg></div>
        <div class="tree-wrap">
          <div class="tree">
            <div class="f"><svg class="cv"><use href="#chvd"/></svg><u></u><svg class="fd"><use href="#fold"/></svg>梁</div>
            <div class="l"><u></u><svg class="ti"><use href="#beam"/></svg>梁<i>(L)</i></div>
            <div class="l"><u></u><svg class="ti"><use href="#ring"/></svg>圈梁<i>(E)</i></div>
            <div class="f"><svg class="cv"><use href="#chvd"/></svg><u></u><svg class="fd"><use href="#fold"/></svg>板</div>
            <div class="l"><u></u><svg class="ti"><use href="#slab"/></svg>现浇板<i>(B)</i></div>
            <div class="l"><u></u><svg class="ti"><use href="#spir"/></svg>螺旋板<i>(B)</i></div>
            <div class="l"><u></u><svg class="ti"><use href="#cap"/></svg>柱帽<i>(V)</i></div>
            <div class="l"><u></u><svg class="ti"><use href="#hole"/></svg>板洞<i>(N)</i></div>
            <div class="l"><u></u><svg class="ti"><use href="#rbf"/></svg>板受力筋<i>(S)</i></div>
            <div class="l"><u></u><svg class="ti"><use href="#neg"/></svg>板负筋<i>(F)</i></div>
            <div class="l"><u></u><svg class="ti"><use href="#band"/></svg>楼层板带<i>(H)</i></div>
            <div class="f"><svg class="cv"><use href="#chvd"/></svg><u></u><svg class="fd"><use href="#fold"/></svg>基础</div>
            <div class="l"><u></u><svg class="ti"><use href="#fbm"/></svg>基础梁<i>(F)</i></div>
            <div class="l"><u></u><svg class="ti"><use href="#raft"/></svg>筏板基础<i>(M)</i></div>
            <div class="l"><u></u><svg class="ti"><use href="#pit"/></svg>集水坑<i>(K)</i></div>
            <div class="l"><u></u><svg class="ti"><use href="#pier"/></svg>柱墩<i>(Y)</i></div>
            <div class="l"><u></u><svg class="ti"><use href="#rmn"/></svg>筏板主筋<i>(R)</i></div>
            <div class="l"><u></u><svg class="ti"><use href="#neg"/></svg>筏板负筋<i>(X)</i></div>
            <div class="l"><u></u><svg class="ti"><use href="#iso"/></svg>独立基础<i>(P)</i></div>
            <div class="l"><u></u><svg class="ti"><use href="#strp"/></svg>条形基础<i>(T)</i></div>
            <div class="l"><u></u><svg class="ti"><use href="#pcap"/></svg>桩承台<i>(V)</i></div>
            <div class="l"><u></u><svg class="ti"><use href="#fbm"/></svg>承台梁<i>(F)</i></div>
            <div class="l"><u></u><svg class="ti"><use href="#pile"/></svg>桩<i>(U)</i></div>
            <div class="l"><u></u><svg class="ti"><use href="#band"/></svg>基础板带<i>(W)</i></div>
            <div class="f"><svg class="cv cvr"><use href="#chvr"/></svg><u></u><svg class="fd"><use href="#foldc"/></svg>其它</div>
            <div class="f"><svg class="cv"><use href="#chvd"/></svg><u></u><svg class="fd"><use href="#fold"/></svg>自定义</div>
            <div class="l"><u></u><svg class="ti"><use href="#pnt"/></svg>自定义点</div>
            <div class="l"><u></u><svg class="ti"><use href="#lnn"/></svg><span class="sel">自定义线<i>(X)</i></span><svg class="gr"><use href="#grid"/></svg></div>
            <div class="l"><u></u><svg class="ti"><use href="#fac"/></svg>自定义面</div>
            <div class="l"><u></u><svg class="ti ti-d"><use href="#dmn"/></svg>尺寸标注<i>(W)</i></div>
            <div class="f"><svg class="cv cvr"><use href="#chvr"/></svg><u></u><svg class="fd"><use href="#foldc"/></svg>CAD识别<svg class="gr gr-cad"><use href="#grid"/></svg><em class="new">NEW</em></div>
          </div>
          <div class="sb">
            <svg class="sb-a" viewBox="0 0 10 6"><path d="M1 5l4-4 4 4" fill="none" stroke="#606060" stroke-width="1.600"/></svg>
            <div class="sb-t"><div class="sb-th"></div></div>
            <svg class="sb-a" viewBox="0 0 10 6"><path d="M1 1l4 4 4-4" fill="none" stroke="#606060" stroke-width="1.600"/></svg>
          </div>
        </div>
      </div>
      <div class="nav-btn nav-btn-b">单构件输入</div>
      <div class="nav-btn nav-btn-b">报表预览</div>
    </aside>

    <main class="work">
      <div class="bars">
        <div class="tr tr2">
          <div class="g g-edit off">
            <b class="grip"></b>
            <span class="b"><svg class="i"><use href="#del"/></svg>删除</span><b class="sep"></b>
            <span class="b"><svg class="i"><use href="#copy"/></svg>复制</span>
            <span class="b"><svg class="i"><use href="#mirr"/></svg>镜像</span><b class="sep"></b>
            <span class="b"><svg class="i"><use href="#move"/></svg>移动</span>
            <span class="b"><svg class="i"><use href="#turn"/></svg>旋转</span><b class="sep"></b>
            <span class="b"><svg class="i"><use href="#ext"/></svg>延伸</span>
            <span class="b"><svg class="i"><use href="#trim"/></svg>修剪</span><b class="sep"></b>
            <span class="b"><svg class="i"><use href="#brk"/></svg>打断</span>
            <span class="b"><svg class="i"><use href="#merg"/></svg>合并</span>
            <span class="b"><svg class="i"><use href="#splt"/></svg>分割</span><b class="sep"></b>
            <span class="b"><svg class="i"><use href="#aln"/></svg>对齐<i class="ar ar-g"></i></span>
            <span class="b"><svg class="i"><use href="#off"/></svg>偏移</span>
            <span class="b"><svg class="i"><use href="#strt"/></svg>拉伸</span><b class="sep"></b>
            <span class="b"><svg class="i"><use href="#grp"/></svg>设置夹点</span>
          </div>
        </div>
        <div class="tr tr3">
          <div class="g g-combo">
            <b class="grip"></b>
            <span class="cb cb1">第7层<i class="ar"></i></span>
            <span class="cb cb2">自定义<i class="ar"></i></span>
            <span class="cb cb2">自定义线<i class="ar"></i></span>
            <span class="cb cb2">ZDYX-19<i class="ar"></i></span>
            <b class="sep"></b>
            <span class="b"><svg class="i"><use href="#prop"/></svg>属性</span>
            <span class="b"><svg class="i"><use href="#edit"/></svg>编辑钢筋</span>
            <span class="b"><svg class="i"><use href="#list"/></svg>构件列表</span>
            <span class="b"><svg class="i"><use href="#pick"/></svg>拾取构件</span>
          </div>
          <div class="g g-axis">
            <b class="grip"></b>
            <span class="b"><svg class="i"><use href="#two"/></svg>两点</span>
            <span class="b"><svg class="i"><use href="#par"/></svg>平行</span>
            <span class="b"><svg class="i"><use href="#ang"/></svg>点角<i class="ar ar-w"></i></span>
            <span class="b"><svg class="i"><use href="#arca"/></svg>三点辅轴<i class="ar ar-w"></i></span>
            <span class="b"><svg class="i"><use href="#dela"/></svg>删除辅轴</span>
            <span class="b"><svg class="i"><use href="#dim"/></svg>长度标注<i class="ar ar-w"></i></span>
          </div>
        </div>
        <div class="tr tr4">
          <div class="g g-draw">
            <b class="grip"></b>
            <span class="b b-sel"><svg class="i-c"><use href="#curs"/></svg>选择<i class="ar ar-w"></i></span><b class="sep"></b>
            <span class="b"><svg class="i"><use href="#line"/></svg>直线</span>
            <span class="b"><svg class="i"><use href="#addl"/></svg>点加长度</span>
            <span class="b"><svg class="i"><use href="#arc"/></svg>三点画弧<i class="ar ar-w"></i></span>
            <span class="cb cb3"><i class="ar"></i></span>
            <span class="b"><svg class="i"><use href="#rect"/></svg>矩形</span><b class="sep"></b>
            <span class="b"><svg class="i"><use href="#smrt"/></svg>智能布置<i class="ar ar-t"></i></span>
          </div>
          <div class="g g-tail"><b class="grip"></b></div>
        </div>
      </div>

      <div class="view">
        <svg class="scene" viewBox="170 168 1196 507" preserveAspectRatio="none">
          <rect x="170" y="168" width="1196" height="507" fill="#000"/>
          <path d="M170 168H690L973 222 955 332 170 183z" fill="#009900"/>
          <path d="M690 168h30L988 220 973 222z" fill="#00e000"/>
          <path d="M720 168L992 220" stroke="#eee"/>
          <path d="M973 222L988 220 970 330 955 332z" fill="#00bb00"/>
          <path d="M988 220h4L973 328 970 330z" fill="#bbb"/>
          <path d="M623 248L780 232 855 245 695 262z" fill="#00b400"/>
          <path d="M695 262L855 245 843 311 692 282z" fill="#00a000"/>
          <path d="M620 268L843 311 843 320 782 382 657 388 603 375z" fill="#004200"/>
          <path d="M692 283L843 311 843 320 782 382 672 386z" fill="#005000"/>
          <path d="M782 382L880 400 967 392 952 480 792 497 765 492z" fill="#5c5c5c"/>
          <path d="M782 382L810 388 792 497 765 492z" fill="#4f4f4f"/>
          <path d="M810 387L885 378 970 371 967 392 882 401z" fill="#707070"/>
          <path d="M885 378L970 371 967 392 882 401z" fill="#8a8a8a"/>
          <path d="M682 335L837 318 1045 357 885 373z" fill="#747474"/>
          <path d="M682 335L885 373 882 401 678 362z" fill="#505050"/>
          <path d="M885 373L1045 357 1041 383 967 392 970 371 885 378z" fill="#686868"/>

          <path d="M170 212L347 245 522 274 490 278 484 313 467 440 170 385z" fill="#8d8d8d"/>
          <path d="M170 212L490 278 484 313 170 260z" fill="#9c9c9c"/>
          <path d="M170 206L522 273 510 277 170 212z" fill="#e4e4e4"/>
          <path d="M170 205L522 273" stroke="#00e000" stroke-width="3"/>
          <path d="M490 278L510 276 485 438 467 441z" fill="#b2b2b2"/>
          <path d="M492 297L508 294 487 420 476 418z" fill="#009f00"/>
          <path d="M476 419L487 421 486 426 476 424z" fill="#eee"/>
          <path d="M511 276L522 274 493 438 483 439z" fill="#00b000"/>
          <path d="M517 303L544 308 523 436 495 432z" fill="#a4a4a4"/>
          <path d="M517 303L544 308 540 316 510 342z" fill="#959595"/>
          <path d="M510 342L532 345 521 436 495 432z" fill="#b8b8b8"/>
          <path d="M506 365L530 364 521 436 495 432z" fill="#a0a0a0"/>
          <path d="M510 342L532 345 510 348z" fill="#eee"/>
          <path d="M530 306L544 308 523 436 519 436z" fill="#b5b5b5"/>
          <path d="M170 212L180 214 180 290 170 290z" fill="#c8c8c8"/>

          <g fill="none" stroke="#fff" stroke-opacity=".5">
            <path d="M667 307l-25 151m35-151.700l-25 151m35-151.700l-25 151m35-151.700l-25 151m35-151.700l-25 151m35-151.700l-25 151m35-151.700l-25 151m35-151.700l-25 151m35-151.700l-25 151m35-151.700l-25 151m35-151.700l-25 151m35-151.700l-25 151m35-151.700l-25 151m35-151.700l-25 151m35-151.700l-25 151m35-151.700l-25 151m35-151.700l-25 151m35-151.700l-25 151"/>
            <path d="M672 305l-23 150m33-150.700l-23 150m33-150.700l-23 150m33-150.700l-23 150m33-150.700l-23 150m33-150.700l-23 150m33-150.700l-23 150m33-150.700l-23 150m33-150.700l-23 150m33-150.700l-23 150m33-150.700l-23 150m33-150.700l-23 150m33-150.700l-23 150m33-150.700l-23 150m33-150.700l-23 150m33-150.700l-23 150"/>
          </g>
          <g fill="none" stroke="#b3a59c" stroke-width="1">
            <path d="M648 420L820 408M667 423L815 411M640 457L817 443M646 459L810 446M645 455L800 441"/>
          </g>
          <g fill="none" stroke-width="1.700">
            <path d="M647 380L634 461 660 467 820 450 833 368 808 363 795 443 820 450" stroke="#fff"/>
            <path d="M647 380L673 387 660 467" stroke="#fff"/>
            <path d="M808 363L795 443 634 461" stroke="#ddd" stroke-width="1.200"/>
            <path d="M673 387L833 368" stroke="#d8d8d8"/>
            <path d="M647 380L808 363" stroke="#c8c8c8"/>
            <path d="M647 380L673 387 745 379M647 380L730 371" stroke="#8fe58f"/>
          </g>
          <g fill="none" stroke="#a5a5a5" stroke-opacity=".85">
            <circle cx="767" cy="421" r="225"/>
            <circle cx="767" cy="195" r="14"/>
            <circle cx="992" cy="421" r="14"/>
            <circle cx="767" cy="646" r="14"/>
            <circle cx="542" cy="421" r="14"/>
          </g>
          <g fill="none" stroke="#ff0000">
            <path d="M170 595L470 652 310 671M170 637L310 622 470 652" stroke-width="1.200"/>
            <path d="M170 645L330 673M170 649L300 675" stroke-width="2"/>
          </g>
          <g fill="none" stroke="#0c8a0c">
            <circle cx="183" cy="597" r="12.500"/>
            <circle cx="183" cy="634" r="12.500"/>
            <circle cx="183" cy="643" r="12.500"/>
          </g>
          <text class="gn" x="178" y="603">8</text>
          <text class="gn" x="178" y="640">9</text>
          <path d="M224 624L180 616" stroke="#00ff00" stroke-width="4"/>
          <path d="M178 616l10-4-2 8z" fill="#00ff00"/>
          <path d="M224 623L235 622" stroke="#ff0000" stroke-width="3"/>
          <path d="M226 623L232 584" stroke="#0a78ff" stroke-width="4"/>
          <path d="M233 578l-4 9 6 1z" fill="#0a78ff"/>
          <path d="M227 572h7l-7 7h7" fill="none" stroke="#0a78ff"/>
          <path d="M216 617l6 6M189 613l4-4" stroke="#ff3030"/>
        </svg>
        <section class="panel">
          <h2>钢筋显示控制面板</h2>
          <div class="plist">
            <label class="focus"><svg class="chk"><use href="#ck"/></svg>水平纵筋</label>
            <label><svg class="chk"><use href="#ck"/></svg>横向钢筋</label>
            <label><svg class="chk"><use href="#ck"/></svg>显示其它图元</label>
            <label><svg class="chk"><use href="#ck"/></svg>显示详细公式</label>
          </div>
        </section>
      </div>

      <div class="tr tr5">
        <div class="g g-o1">
          <b class="grip"></b>
          <span class="b"><svg class="i i-o"><use href="#orth"/></svg>正交</span>
          <span class="b b-on"><svg class="i"><use href="#snap"/></svg>对象捕捉</span>
          <span class="b"><svg class="i"><use href="#dyn"/></svg>动态输入</span>
        </div>
        <div class="g g-o2">
          <b class="grip"></b>
          <span class="b"><svg class="i"><use href="#crs"/></svg>交点</span>
          <span class="b b-on"><svg class="i"><use href="#perp"/></svg>垂点</span>
          <span class="b b-on"><svg class="i"><use href="#mid"/></svg>中点</span>
          <span class="b"><svg class="i"><use href="#vrt"/></svg>顶点</span>
          <span class="b"><svg class="i"><use href="#crd"/></svg>坐标</span>
        </div>
        <div class="g g-o3">
          <b class="grip"></b>
          <span class="cb cb4">不偏移<i class="ar"></i></span>
          <b class="sep"></b>
          <span class="lb lb-x">X=</span><span class="spin">0</span><span class="lb">mm</span>
          <span class="lb lb-y">Y=</span><span class="spin">0</span><span class="lb">mm</span>
          <b class="sep"></b>
          <b class="chk2"></b>
          <span class="rot">旋转</span><span class="spin spin-w">0.000</span><span class="lb">°</span>
        </div>
      </div>
    </main>
  </div>

  <footer class="status">
    <span class="c c1"><i>X=153657 Y=-2703</i></span>
    <span class="c c2">层高<i>:2.8m</i></span>
    <span class="c c3">底标高<i>:20.35m</i></span>
    <span class="c c4"><i>1(1)</i></span>
    <span class="c c5"></span>
    <span class="c c6"><i>129.2 FPS</i></span>
  </footer>

  <div class="task">
    <div class="t-start"><svg class="t-win"><use href="#win"/></svg></div>
    <div class="t-search"><b class="ring"></b><span>在这里输入你要搜索的内容</span><svg class="t-mic"><use href="#mic"/></svg></div>
    <div class="t"><svg class="t22"><use href="#tview"/></svg></div>
    <div class="t"><svg class="t24"><use href="#fan"/></svg></div>
    <div class="t"><svg class="t24"><use href="#iew"/></svg></div>
    <div class="t"><svg class="t24"><use href="#swrl"/></svg></div>
    <div class="t"><svg class="t24"><use href="#edge"/></svg></div>
    <div class="t"><svg class="t24"><use href="#ie"/></svg></div>
    <div class="t"><svg class="t24"><use href="#dir"/></svg></div>
    <div class="t run"><svg class="t24"><use href="#gre"/></svg></div>
    <div class="t run"><svg class="t24"><use href="#note"/></svg></div>
    <div class="t run act"><svg class="t24"><use href="#gld"/></svg></div>
    <div class="t run"><svg class="t24"><use href="#gg"/></svg></div>
    <div class="t run"><svg class="t24"><use href="#book"/></svg></div>
    <div class="t t-txt">链接</div>
    <div class="t t-cpu"><span>22%</span><span>CPU使用</span></div>
    <div class="t"><svg class="t14"><use href="#up"/></svg></div>
    <div class="t"><svg class="t18"><use href="#batt"/></svg></div>
    <div class="t"><svg class="t16"><use href="#wifi"/></svg></div>
    <div class="t"><svg class="t16"><use href="#spk"/></svg></div>
    <div class="t"><svg class="t24k"><use href="#kbd"/></svg></div>
    <div class="t t-a">A</div>
    <div class="t"><svg class="t18"><use href="#sgo"/></svg></div>
    <div class="t t-clock"><span>18:49</span><span>2018/7/12</span></div>
    <div class="t"><svg class="t16"><use href="#ntf"/></svg></div>
    <div class="t-desk"></div>
  </div>
</div>
</body>
</html>
```
FILE: styles.css
```css
* { box-sizing: border-box; }
html, body { margin: 0; padding: 0; }
body {
  width: 1366px; height: 768px; overflow: hidden;
  font: 12px/16px "Noto Sans CJK SC", sans-serif;
  color: #111; background: #f0f0f0;
}
.defs { width: 0; height: 0; display: block; overflow: hidden; }
.app { width: 1366px; height: 768px; display: flex; flex-direction: column; }
svg { display: block; flex: none; }
i, em { font-style: normal; }

/* title bar */
.title { position: relative; height: 23px; flex: none; background: #fff; display: flex; align-items: center; }
.ic-title { width: 15px; height: 15px; margin: 0 6px 0 2px; }
.title-text { color: #808080; font-size: 12.620px; white-space: nowrap; }
.wc { position: absolute; top: 6px; }
.wc-min { left: 1245px; top: 11px; width: 10px; height: 1px; background: #888; }
.wc-max { left: 1291px; width: 10px; height: 11px; border: 1px solid #888; box-shadow: 2px -2px 0 -1px #f0f0f0, 2px -2px 0 0 #aaa; }
.wc-x { position: absolute; left: 1336px; top: 5px; width: 12px; height: 12px; }
.ime { position: absolute; left: 968px; top: 0; width: 207px; height: 28px; z-index: 3; }
.ime-green { position: absolute; left: 4px; top: -8px; width: 48px; height: 14px; background: #47bb5e; border-radius: 0 0 24px 24px; border: 1px solid #777; }
.ime-s { position: absolute; left: 0; top: 2px; width: 24px; height: 25px; z-index: 2; }
.ime-bar { position: absolute; left: 15px; top: 3px; width: 192px; height: 21px; background: #fff; border: 2px solid #c3d3e2; display: flex; align-items: center; padding-left: 12px; gap: 7px; }
.im { width: 15px; height: 15px; }

/* menu */
.menu {
  height: 29px; flex: none; background: #f0f0f0;
  display: grid; align-items: center; padding-left: 7px;
  grid-template-columns: 48px 49px 48px 52px 51px 54px 64px 50px 49px 61px 70px 73px 51px 61px 86px 91px 166px 117px 55px 55px 1fr;
}
.menu span { white-space: nowrap; }
.menu .mi { display: flex; align-items: center; gap: 5px; }
.menu .mi .ar { margin-left: 0; }
.menu .news { color: #5a3810; background: #f5f5f5; height: 25px; line-height: 25px; padding-left: 25px; margin-left: -25px; width: 200px; }
.i14 { width: 14px; height: 17px; }
.more { width: 9px; height: 8px; }
.menu .more { justify-self: start; margin-top: -6px; }
.ar { display: inline-block; width: 0; height: 0; flex: none; border: 3px solid transparent; border-top: 3px solid #222; border-bottom: 0; margin-left: 5px; }
.ar-w { margin-left: 1px; margin-right: 1px; }
.ar-t { margin-left: -3px; }
.ar-g { margin-left: -2px; border-top-color: #888; }

/* groups */
.g { display: flex; align-items: center; height: 100%; background: #f6f7f8; border-radius: 2px; white-space: nowrap; }
.i { width: 15px; height: 15px; }
.i-c { width: 9px; height: 13px; }
.b { display: flex; align-items: center; gap: 5px; padding: 0 3px 0 4px; height: 100%; color: #111; }
.off, .off .b { color: #9a9a9a; }
.sep { width: 1px; height: 18px; background: #c8c8c8; flex: none; margin: 0 3px; }
.grip { width: 2px; height: 14px; flex: none; margin: 0 1px 0 4px; background: repeating-linear-gradient(180deg, #a8a8a8 0 2px, transparent 2px 4px); }
.more-end { margin-left: auto; margin-right: 4px; margin-top: -9px; }

.row1 { height: 32px; flex: none; padding: 2px 0 3px 2px; display: flex; gap: 3px; }
.g-a { width: 148px; padding-left: 4px; }
.g-a .i { margin-right: 7px; }
.g-a .ar { margin: 0 9px 0 -1px; }
.g-a .sep { height: 24px; margin: 0 8px 0 0; }
.i-open { width: 17px; height: 15px; }
.g-b { width: 546px; padding-left: 1px; }
.g-c { width: 662px; margin-left: 6px; }
.b-s { padding: 0 2px 0 6px; gap: 10px; }
.sigma { font: bold 14px "Liberation Sans", sans-serif; }
.g-c .b-w { background: #fff; padding-left: 3px; padding-right: 0; margin-right: 2px; }
.g-c .sep { margin: 0 2px; }
.b-on { background: #e0eefb; box-shadow: inset 0 0 0 1px #1a80d0; }
.g-c .b-on { height: 23px; margin: 0 0 0 2px; padding-right: 1px; padding-left: 4px; }

/* main */
.body { flex: 1; min-height: 0; display: flex; }
.nav { width: 165px; flex: none; display: flex; flex-direction: column; padding-bottom: 3px; }
.nav-head { height: 14px; flex: none; border: 1px solid #888; background: #f4f4f4; font-size: 12px; line-height: 12px; display: flex; align-items: center; white-space: nowrap; }
.nav-head span { flex: 1; }
.pin { width: 8px; height: 10px; margin-right: 11px; }
.cls { width: 8px; height: 8px; margin-right: 5px; }
.nav-btn { height: 22px; flex: none; border: 1px solid #a0a0a0; border-right-color: #888; background: #f0f0f0; text-align: center; line-height: 20px; font-size: 12px; margin: 1px 0 0 1px; }
.nav-head + .nav-btn { margin-top: 2px; }
.nav-btn-b { height: 22px; }
.tree-box { flex: 1; min-height: 0; margin: 1px 0 3px 1px; border: solid #a0a0a0; border-width: 0 1px; display: flex; flex-direction: column; background: #fff; box-shadow: inset 0 -1px 0 #a0a0a0; }
.tree-tools { height: 28px; flex: none; display: flex; align-items: center; padding: 0 0 0 5px; gap: 6px; }
.tt { width: 18px; height: 15px; }
.tree-wrap { flex: 1; min-height: 0; display: flex; overflow: hidden; margin-bottom: 1px; }
.tree { flex: 1; min-width: 0; overflow: hidden; font-size: 12px; white-space: nowrap; }
.f, .l { height: 16px; display: flex; align-items: center; line-height: 16px; background: repeating-linear-gradient(180deg, #8a8a8a 0 1px, transparent 1px 3px) 13px 0 / 1px 100% no-repeat; }
.f { padding-left: 8px; }
.l { padding-left: 32px; }
.f u { width: 5px; height: 0; border-top: 1px dotted #888; margin-left: 1px; flex: none; }
.l u { width: 12px; height: 16px; flex: none; border-left: 1px dotted #888; background: repeating-linear-gradient(90deg, #888 0 1px, transparent 1px 3px) 0 50% / 100% 1px no-repeat; }
.cv { width: 10px; height: 8px; }
.cvr { width: 8px; height: 10px; margin: 0 1px; }
.fd { width: 16px; height: 14px; margin-right: 5px; }
.ti { width: 15px; height: 15px; margin-right: 5px; position: relative; z-index: 1; }
.ti-d { height: 19px; margin-top: 2px; }
.l i, .c i { font: 12px/16px "Liberation Mono", monospace; letter-spacing: -1.200px; }
.sel { background: #ccc; margin-left: -22px; padding-left: 22px; width: 88px; flex: none; }
.gr { width: 12px; height: 12px; margin-left: 1px; }
.gr-cad { margin-left: 5px; }
.new { background: #ffe23a; color: #333; font: 9px/12px "Liberation Sans", sans-serif; padding: 0 1px; margin-left: 1px; }
.sb { width: 16px; flex: none; background: #f0f0f0; display: flex; flex-direction: column; margin-right: 2px; }
.sb-a { width: 10px; height: 6px; margin: 5px 3px; flex: none; }
.sb-t { flex: 1; min-height: 0; padding-top: 119px; padding-bottom: 19px; }
.sb-th { height: 100%; background: #cdcdcd; }

.work { flex: 1; min-width: 0; display: flex; flex-direction: column; }
.bars { flex: none; height: 84px; padding-left: 7px; display: flex; flex-direction: column; }
.tr { display: flex; }
.tr2 { height: 25px; margin-bottom: 2px; }
.tr3 { height: 26px; margin-bottom: 3px; }
.tr4 { height: 26px; margin-bottom: 2px; }
.g-edit { width: 786px; }
.g-edit .grip { margin-right: -1px; }
.g-edit .sep { margin: 0 2.500px; }
.g-combo { width: 565px; }
.g-combo .sep { margin-left: 1px; }
.cb { background: #fff; display: flex; align-items: center; justify-content: space-between; height: 24px; padding: 0 2px; margin-right: 3px; flex: none; }
.cb .ar { margin: 0 2px 0 0; }
.cb1 { width: 57px; }
.cb2 { width: 69px; }
.cb3 { width: 56px; margin: 0 1px 0 0; justify-content: flex-end; }
.cb4 { width: 58px; }
.g-axis { width: 421px; margin-left: 73px; }
.g-draw { width: 488px; }
.b-sel { padding: 0 0 0 6px; gap: 7px; }
.b-sel .ar { margin-left: -1px; }
.g-tail { width: 32px; background: #f9f9f9; }

.view { position: relative; height: 507px; flex: none; margin-left: 5px; background: #000; overflow: hidden; }
.scene { width: 1196px; height: 507px; }
.gn { font: 17px "Liberation Mono", monospace; fill: #ccc; }
.panel { position: absolute; left: 9px; top: 2px; width: 168px; height: 179px; background: #fff; border: 2px solid #3f8fe6; box-shadow: 2px 2px 8px rgba(0,0,0,.35); }
.panel h2 { margin: 0; height: 30px; line-height: 27px; padding-left: 7px; font-size: 12px; font-weight: 400; color: #333; }
.plist { height: 145px; border: solid #999; border-width: 1px 2px 2px 1px; padding: 1px 0 0 3px; }
.plist label { display: flex; align-items: center; height: 12px; font-size: 12px; line-height: 12px; color: #000; }
.chk { width: 11px; height: 11px; margin-right: 3px; }
.focus { outline: 1px dotted #222; outline-offset: -1px; }
.tr5 { height: 33px; flex: none; padding: 2px 0 3px 7px; }
.g-o1 { width: 208px; }
.g-o2 { width: 260px; margin-left: 1px; }
.g-o3 { width: 407px; margin-left: 5px; }
.tr5 .b-on { height: 24px; }
.i-o { width: 17px; margin-right: -4px; }
.g-o3 .cb { margin-right: 2px; }
.g-o3 .sep { margin: 0 1px 0 3px; }
.lb { color: #666; padding: 0 2px; }
.lb-x { padding-right: 4px; }
.lb-y { padding-right: 6px; }
.spin { width: 58px; height: 22px; flex: none; border: 1px solid #808080; background: #f7f7f7; color: #555; text-align: right; line-height: 20px; padding-right: 18px; position: relative; }
.spin::after { content: "▴\A▾"; white-space: pre; position: absolute; right: 3px; top: 0; font: 9px/10px "DejaVu Sans", sans-serif; color: #666; }
.spin-w { width: 68px; margin-left: 4px; }
.chk2 { width: 12px; height: 12px; border: 1px solid #888; background: #fff; flex: none; }
.rot { margin-left: 8px; color: #111; }

/* status */
.status { height: 20px; flex: none; display: flex; gap: 2px; background: #f0f0f0; }
.c { border: solid #dcdcdc; border-width: 2px 2px 0; background: #f7f7f7; font-size: 12px; line-height: 17px; padding-left: 1px; white-space: nowrap; overflow: hidden; flex: none; }
.c1 { width: 148px; }
.c2 { width: 77px; }
.c3 { width: 99px; }
.c4 { width: 48px; }
.c5 { width: 914px; }
.c6 { width: 70px; }

/* taskbar */
.task { height: 40px; flex: none; background: #03090d; color: #e8e8e8; display: grid; align-items: stretch;
  grid-template-columns: 48px 344px 49px 51px 51px 50px 46px 43px 42px 42px 42px 42px 42px 42px 50px 66px 30px 22px 25px 23px 31px 26px 29px 80px 35px 15px; }
.t-start { background: #000; display: flex; align-items: center; justify-content: center; }
.t-win { width: 16px; height: 16px; }
.t-search { background: #2e2e2e; display: flex; align-items: center; color: #8c8c8c; font-size: 13.700px; padding-left: 10px; }
.ring { width: 20px; height: 20px; border: 2px solid #d8d8d8; border-radius: 50%; margin-right: 6px; flex: none; }
.t-search span { width: 276px; white-space: nowrap; }
.t-mic { width: 12px; height: 18px; margin-left: 1px; }
.t { display: flex; align-items: center; justify-content: center; }
.t22 { width: 22px; height: 18px; }
.t24 { width: 24px; height: 26px; }
.t14 { width: 14px; height: 8px; }
.t16 { width: 16px; height: 16px; }
.t18 { width: 18px; height: 18px; }
.t24k { width: 24px; height: 16px; }
.run { background: linear-gradient(#74b1e6,#74b1e6) 50% 100% / 34px 3px no-repeat; }
.act { background: linear-gradient(#74b1e6,#74b1e6) 50% 100% / 100% 3px no-repeat, #3a4044; }
.t-txt { font-size: 13px; color: #ddd; }
.t-cpu, .t-clock { flex-direction: column; font-size: 13px; line-height: 19px; color: #e0e0e0; white-space: nowrap; }
.t-a { font: 21px "Liberation Sans", sans-serif; }
.t-desk { background: #05090c; }
```
